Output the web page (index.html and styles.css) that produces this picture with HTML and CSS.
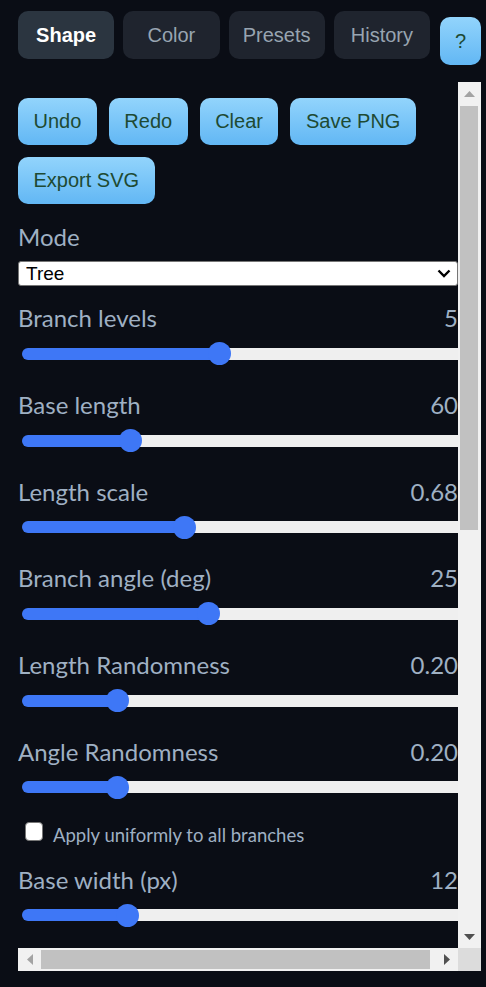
FILE: index.html
```html
<!DOCTYPE html>
<html lang="en">
<head>
<meta charset="utf-8">
<title>Fractal Tree</title>
<link rel="stylesheet" href="styles.css">
</head>
<body>
<div class="app">
  <div class="tabs">
    <button class="tab tab-active">Shape</button>
    <button class="tab">Color</button>
    <button class="tab">Presets</button>
    <button class="tab">History</button>
    <button class="help">?</button>
  </div>
  <div class="panel">
    <div class="viewport">
      <div class="panel-inner">
        <div class="actions">
          <button class="btn">Undo</button>
          <button class="btn">Redo</button>
          <button class="btn">Clear</button>
          <button class="btn">Save PNG</button>
          <button class="btn">Export SVG</button>
        </div>

        <div class="field">
          <div class="field-head"><span>Mode</span></div>
          <div class="select-wrap">
            <select class="select"><option>Tree</option><option>Fern</option></select>
            <svg class="chev" width="14" height="9" viewBox="0 0 14 9"><path d="M1.5 1.5 L7 7 L12.5 1.5" fill="none" stroke="#000" stroke-width="2.4"/></svg>
          </div>
        </div>

        <div class="field">
          <div class="field-head"><span>Branch levels</span><span>5</span></div>
          <input class="range" type="range" min="1" max="10" step="1" value="5" style="--p:0.444">
        </div>
        <div class="field">
          <div class="field-head"><span>Base length</span><span>60</span></div>
          <input class="range" type="range" min="10" max="225" step="1" value="60" style="--p:0.233">
        </div>
        <div class="field">
          <div class="field-head"><span>Length scale</span><span>0.68</span></div>
          <input class="range" type="range" min="0.5" max="1" step="0.01" value="0.68" style="--p:0.36">
        </div>
        <div class="field">
          <div class="field-head"><span>Branch angle (deg)</span><span>25</span></div>
          <input class="range" type="range" min="0" max="60" step="1" value="25" style="--p:0.417">
        </div>
        <div class="field">
          <div class="field-head"><span>Length Randomness</span><span>0.20</span></div>
          <input class="range" type="range" min="0" max="1" step="0.01" value="0.2" style="--p:0.2">
        </div>
        <div class="field">
          <div class="field-head"><span>Angle Randomness</span><span>0.20</span></div>
          <input class="range" type="range" min="0" max="1" step="0.01" value="0.2" style="--p:0.2">
        </div>

        <label class="check"><input type="checkbox" class="checkbox"><span>Apply uniformly to all branches</span></label>

        <div class="field">
          <div class="field-head"><span>Base width (px)</span><span>12</span></div>
          <input class="range" type="range" min="1" max="50" step="1" value="12" style="--p:0.224">
        </div>
      </div>
    </div>

    <div class="vbar">
      <div class="sb-btn"><svg width="11" height="6" viewBox="0 0 11 6"><polygon points="0,6 5.5,0 11,6" fill="#a3a3a3"/></svg></div>
      <div class="vtrack"><div class="vthumb"></div></div>
      <div class="sb-btn"><svg width="11" height="6" viewBox="0 0 11 6"><polygon points="0,0 11,0 5.5,6" fill="#505050"/></svg></div>
    </div>
    <div class="hbar">
      <div class="sb-btn"><svg width="6" height="11" viewBox="0 0 6 11"><polygon points="6,0 6,11 0,5.5" fill="#a3a3a3"/></svg></div>
      <div class="htrack"><div class="hthumb"></div></div>
      <div class="sb-btn"><svg width="6" height="11" viewBox="0 0 6 11"><polygon points="0,0 6,5.5 0,11" fill="#505050"/></svg></div>
    </div>
    <div class="corner"></div>
  </div>
</div>
</body>
</html>
```
FILE: styles.css
```css
* { box-sizing: border-box; }

html, body {
  margin: 0;
  padding: 0;
  background: #0a0d15;
}

body {
  font-family: Lato, "Noto Sans", sans-serif;
  color: #9fb0c3;
}

.app {
  width: 463px;
  margin-left: 18px;
  padding-top: 11px;
}

.tabs {
  display: flex;
  align-items: flex-start;
  gap: 9px;
  height: 48px;
}

.tab {
  flex: 1;
  height: 48px;
  border: none;
  border-radius: 10px;
  background: #1f242e;
  color: #98a4b1;
  font: 20px "Liberation Sans", Arial, sans-serif;
  padding: 0;
}

.tab-active {
  background: #2b3540;
  color: #ffffff;
  font-weight: bold;
}

.help {
  width: 41px;
  height: 48px;
  margin-top: 6px;
  margin-left: 1px;
  border: none;
  border-radius: 10px;
  background: linear-gradient(#92d4fc, #62b7f4);
  color: #1e4a33;
  font: 20px "Liberation Sans", Arial, sans-serif;
  padding: 0;
}

.panel {
  margin-top: 23px;
  display: grid;
  grid-template-columns: 440px 23px;
  grid-template-rows: 866px 23px;
}

.viewport {
  overflow: hidden;
}

.vbar {
  display: flex;
  flex-direction: column;
  background: #f1f1f1;
}

.hbar {
  display: flex;
  background: #f1f1f1;
}

.sb-btn {
  flex: none;
  width: 23px;
  height: 23px;
  display: flex;
  align-items: center;
  justify-content: center;
}

.vtrack {
  flex: 1;
  padding: 1px 3px 0 2px;
}

.vthumb {
  height: 424px;
  background: #c1c1c1;
}

.htrack {
  flex: 1;
  padding: 2px 0 2px 0;
}

.hthumb {
  width: 389px;
  height: 100%;
  background: #c1c1c1;
}

.corner {
  background: #dcdcdc;
}

.panel-inner {
  display: flex;
  flex-direction: column;
  padding-top: 16px;
}

.actions {
  display: flex;
  flex-wrap: wrap;
  gap: 12px;
}

.btn {
  height: 47px;
  padding: 0 15.5px;
  border: none;
  border-radius: 10px;
  background: linear-gradient(#92d4fc, #62b7f4);
  color: #1e4a33;
  font: 20px "Liberation Sans", Arial, sans-serif;
}

.field {
  display: flex;
  flex-direction: column;
  margin-top: 17.7px;
}

.field-head {
  display: flex;
  justify-content: space-between;
  height: 30px;
  line-height: 30px;
  font-size: 24px;
  margin-bottom: 9px;
  white-space: nowrap;
}

.select-wrap {
  position: relative;
}

.select {
  display: block;
  width: 100%;
  height: 25px;
  -webkit-appearance: none;
  appearance: none;
  border: 1px solid #767676;
  border-radius: 3px;
  background: #ffffff;
  color: #000000;
  font: 19px "Liberation Sans", Arial, sans-serif;
  padding: 0 0 0 7px;
}

.chev {
  position: absolute;
  right: 7px;
  top: 8px;
  pointer-events: none;
}

.range {
  -webkit-appearance: none;
  appearance: none;
  display: block;
  width: calc(100% + 2px);
  height: 23px;
  margin: 0 0 7px 4px;
  background: transparent;
}

.range::-webkit-slider-runnable-track {
  height: 12px;
  border-radius: 6px;
  background: linear-gradient(to right, #3e77f6 calc(11.5px + var(--p) * (100% - 23px)), #efefef 0);
}

.range::-webkit-slider-thumb {
  -webkit-appearance: none;
  appearance: none;
  width: 23px;
  height: 23px;
  border-radius: 50%;
  background: #3e77f6;
  margin-top: -5.5px;
  border: none;
}

.check {
  display: flex;
  align-items: center;
  height: 24px;
  margin-top: 14px;
  margin-bottom: 3px;
  font-size: 18.5px;
}

.checkbox {
  flex: none;
  -webkit-appearance: none;
  appearance: none;
  width: 18px;
  height: 19px;
  margin: 0 10px 0 7px;
  background: #ffffff;
  border: 1px solid #767676;
  border-radius: 4px;
}

.check span {
  margin-top: 6px;
}
```
